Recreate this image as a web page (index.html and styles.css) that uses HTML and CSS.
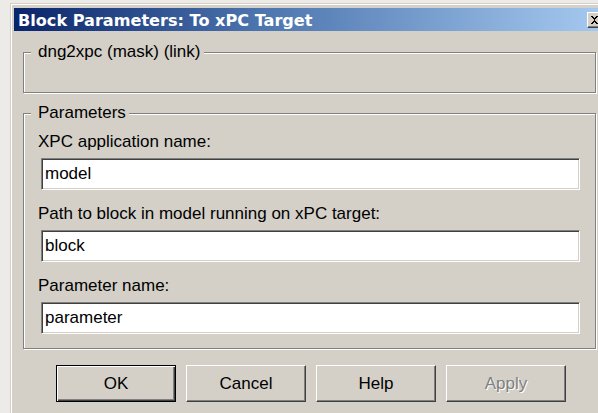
FILE: index.html
```html
<!DOCTYPE html>
<html>
<head>
<meta charset="utf-8">
<title>Block Parameters: To xPC Target</title>
<link rel="stylesheet" href="styles.css">
</head>
<body>
<div class="window">
  <div class="titlebar">
    <span class="title">Block Parameters: To xPC Target</span>
    <span class="close">
      <svg width="9" height="8" viewBox="0 0 9 8"><path d="M1 0h2v1h1v1h1V1h1V0h2v1H7v1H6v1H5v2h1v1h1v1h1v1H6V7H5V6H4v1H3v1H1V7h1V6h1V5h1V3H3V2H2V1H1z" fill="#000"/></svg>
    </span>
  </div>
  <div class="client">
    <fieldset class="group group-mask">
      <legend>dng2xpc (mask) (link)</legend>
      <div class="mask-body"></div>
    </fieldset>
    <fieldset class="group group-params">
      <legend>Parameters</legend>
      <div class="field-label first">XPC application name:</div>
      <div class="field">model</div>
      <div class="field-label">Path to block in model running on xPC target:</div>
      <div class="field">block</div>
      <div class="field-label">Parameter name:</div>
      <div class="field">parameter</div>
    </fieldset>
    <div class="buttons">
      <button class="btn btn-default">OK</button>
      <button class="btn">Cancel</button>
      <button class="btn">Help</button>
      <button class="btn btn-disabled">Apply</button>
    </div>
  </div>
</div>
</body>
</html>
```
FILE: styles.css
```css
html, body {
  margin: 0;
  padding: 0;
}

body {
  width: 598px;
  height: 413px;
  overflow: hidden;
  background: #ecebe8;
  font-family: "Liberation Sans", Arial, sans-serif;
  font-size: 17px;
  color: #000;
}

/* window frame */
.window {
  margin: 3px 0 0 10px;
  width: 600px;
  height: 420px;
  background: #d4d0c8;
  border-top: 1px solid #d4d0c8;
  border-left: 1px solid #d4d0c8;
  box-shadow: inset 1px 1px #ffffff;
  padding: 4px 0 0 3px;
  box-sizing: border-box;
}

/* caption bar */
.titlebar {
  width: 591px;
  height: 23px;
  display: flex;
  align-items: flex-start;
  background: linear-gradient(to right, #0a246a 0%, #4a72ac 40%, #a6caf0 100%);
}

.title {
  padding: 2px 0 0 4px;
  line-height: 21px;
  font-family: "DejaVu Sans", "Liberation Sans", sans-serif;
  font-size: 16.1px;
  font-weight: bold;
  color: #ffffff;
  white-space: nowrap;
}

.close {
  margin: 4px 2px 0 auto;
  width: 16px;
  height: 16px;
  box-sizing: border-box;
  background: #d4d0c8;
  border-top: 1px solid #ffffff;
  border-left: 1px solid #ffffff;
  border-right: 1px solid #404040;
  border-bottom: 1px solid #404040;
  box-shadow: inset -1px -1px #808080;
  display: flex;
  align-items: center;
  justify-content: center;
}

.close svg {
  display: block;
  margin: 0 1px 1px 0;
}

.client {
  padding: 11px 0 0 9px;
}

/* etched group boxes */
.group {
  margin: 0;
  width: 573px;
  box-sizing: border-box;
  border: 1px solid #808080;
  box-shadow: inset 1px 1px #ffffff, 1px 1px #ffffff;
  padding: 0 15px 0 7px;
  min-width: 0;
}

.group legend {
  padding: 0 3px 0 7px;
  line-height: 20px;
  background: #d4d0c8;
  color: #000;
}

.mask-body {
  height: 30px;
}

.group-params {
  margin-top: 10px;
  padding-bottom: 14px;
}

.field-label {
  margin: 14px 0 0 7px;
  line-height: 20px;
  white-space: nowrap;
}

.field-label.first {
  margin-top: 9px;
}

/* sunken edit boxes */
.field {
  margin: 6px 0 0 10px;
  height: 32px;
  box-sizing: border-box;
  background: #ffffff;
  border: 1px solid;
  border-color: #808080 #ffffff #ffffff #808080;
  box-shadow: inset 1px 1px #404040, inset -1px -1px #d4d0c8;
  padding: 0 0 0 3px;
  line-height: 30px;
}

/* push buttons */
.buttons {
  display: flex;
  gap: 10px;
  margin: 16px 0 0 33px;
}

.btn {
  width: 120px;
  height: 37px;
  box-sizing: border-box;
  margin: 0;
  padding: 0;
  background: #d4d0c8;
  font-family: inherit;
  font-size: 17px;
  color: #000;
  border: 1px solid;
  border-color: #ffffff #404040 #404040 #ffffff;
  box-shadow: inset -1px -1px #808080;
}

.btn-default {
  border: 1px solid #000000;
  box-shadow: inset 1px 1px #ffffff, inset -1px -1px #404040, inset -2px -2px #808080;
}

.btn-disabled {
  color: #808080;
  text-shadow: 1px 1px #ffffff;
}
```
